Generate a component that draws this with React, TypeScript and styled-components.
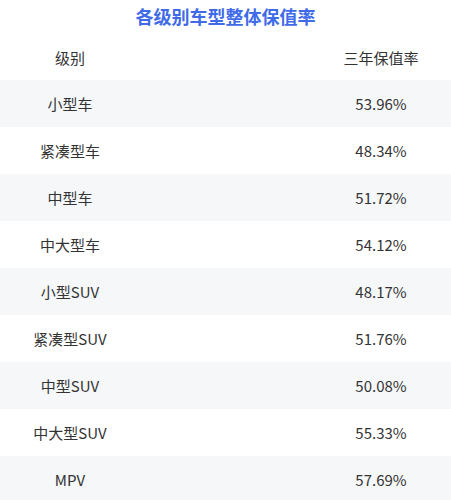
import React from 'react';
import styled, { createGlobalStyle } from 'styled-components';

const GlobalStyle = createGlobalStyle`
  html, body {
    margin: 0;
    padding: 0;
    background: #ffffff;
  }
  body {
    font-family: "Noto Sans CJK SC", "Noto Sans", sans-serif;
  }
`;

const rows = [
  { level: '小型车', rate: '53.96%' },
  { level: '紧凑型车', rate: '48.34%' },
  { level: '中型车', rate: '51.72%' },
  { level: '中大型车', rate: '54.12%' },
  { level: '小型SUV', rate: '48.17%' },
  { level: '紧凑型SUV', rate: '51.76%' },
  { level: '中型SUV', rate: '50.08%' },
  { level: '中大型SUV', rate: '55.33%' },
  { level: 'MPV', rate: '57.69%' },
];

export default function App() {
  return (
    <>
      <GlobalStyle />
      <Page>
        <Title>各级别车型整体保值率</Title>
        <Table>
          <HeadRow>
            <Cell>级别</Cell>
            <Cell>三年保值率</Cell>
          </HeadRow>
          {rows.map((r, i) => (
            <Row key={r.level} $striped={i % 2 === 0}>
              <Cell>{r.level}</Cell>
              <Cell>{r.rate}</Cell>
            </Row>
          ))}
        </Table>
      </Page>
    </>
  );
}

const Page = styled.main`
  width: 451px;
  display: flex;
  flex-direction: column;
`;

const Title = styled.h1`
  margin: 0;
  height: 34px;
  line-height: 32px;
  text-align: center;
  font-size: 18px;
  font-weight: 700;
  color: #3f6ae8;
`;

const Table = styled.div`
  display: flex;
  flex-direction: column;
`;

const Row = styled.div<{ $striped?: boolean }>`
  height: 47px;
  display: flex;
  align-items: center;
  justify-content: space-between;
  background: ${({ $striped }) => ($striped ? '#f5f7f9' : '#ffffff')};
  font-size: 15px;
  color: #333333;
`;

const HeadRow = styled(Row)`
  height: 46px;
  padding-top: 0;
`;

const Cell = styled.div`
  width: 140px;
  text-align: center;
  white-space: nowrap;
`;
